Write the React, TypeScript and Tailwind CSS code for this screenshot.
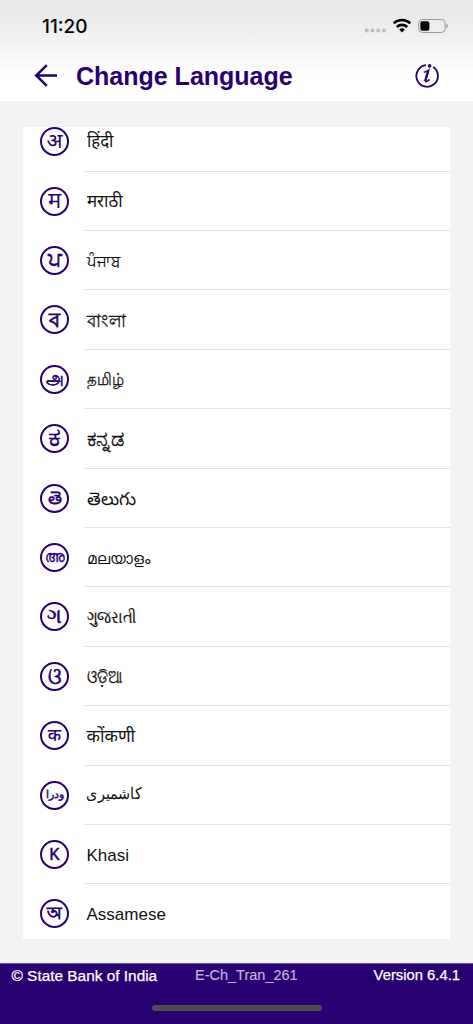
interface Language {
  symbol: string;
  name: string;
  symbolClass: string;
  nameClass: string;
  dir?: "rtl";
}

const languages: Language[] = [
  { symbol: "अ", name: "हिंदी", symbolClass: "text-[21px] pb-0.5 font-normal", nameClass: "text-[18px] pb-0.5 scale-x-[0.93]" },
  { symbol: "म", name: "मराठी", symbolClass: "text-[22px] font-normal", nameClass: "text-[18px] pb-0.5 scale-x-[0.94]" },
  { symbol: "ਪ", name: "ਪੰਜਾਬ", symbolClass: "text-[21px] pb-0.5 font-normal [-webkit-text-stroke:0.5px]", nameClass: "text-[17px] scale-x-[0.88] [-webkit-text-stroke:0.2px]" },
  { symbol: "ব", name: "বাংলা", symbolClass: "text-[20px] font-normal [-webkit-text-stroke:0.8px]", nameClass: "text-[18px] scale-x-[0.94] [-webkit-text-stroke:0.3px]" },
  { symbol: "அ", name: "தமிழ்", symbolClass: "text-[18px] pb-0.5 scale-x-[0.88] font-normal [-webkit-text-stroke:0.7px]", nameClass: "text-[17px] scale-x-[0.88] [-webkit-text-stroke:0.3px]" },
  { symbol: "ಕ", name: "ಕನ್ನಡ", symbolClass: "text-[26px] pb-1 font-normal scale-x-110 [-webkit-text-stroke:0.5px]", nameClass: "text-[21px] pb-0.5 [-webkit-text-stroke:0.4px]" },
  { symbol: "తె", name: "తెలుగు", symbolClass: "text-[18px] font-normal [-webkit-text-stroke:0.4px]", nameClass: "text-[18px] scale-x-[0.98]" },
  { symbol: "അ", name: "മലയാളം", symbolClass: "text-[16px] scale-x-[0.9] font-normal [-webkit-text-stroke:0.4px]", nameClass: "text-[15.5px] pt-0.5 scale-x-[0.96]" },
  { symbol: "ગ", name: "ગુજરાતી", symbolClass: "text-[20px] pb-0.5 font-normal [-webkit-text-stroke:0.6px]", nameClass: "text-[17px] scale-x-[0.87] [-webkit-text-stroke:0.2px]" },
  { symbol: "ଓ", name: "ଓଡ଼ିଆ", symbolClass: "text-[23px] scale-x-[0.85] font-normal [-webkit-text-stroke:0.7px]", nameClass: "text-[18px] scale-x-[0.83] [-webkit-text-stroke:0.25px]" },
  { symbol: "क", name: "कोंकणी", symbolClass: "text-[17px] font-medium", nameClass: "text-[17.5px]" },
  { symbol: "ودرا", name: "کاشمیری", symbolClass: "text-[11px] pb-0.5 font-normal [-webkit-text-stroke:0.4px]", nameClass: "text-[16px] pb-1 -ml-px scale-x-[0.9]", dir: "rtl" },
  { symbol: "K", name: "Khasi", symbolClass: "text-[17px] scale-x-[0.9] font-normal [-webkit-text-stroke:0.6px]", nameClass: "text-[17px]" },
  { symbol: "অ", name: "Assamese", symbolClass: "text-[17px] font-normal [-webkit-text-stroke:0.8px]", nameClass: "text-[17px]" },
];

function StatusBar() {
  return (
    <div className="flex h-[52px] items-center justify-between pl-[42px] pr-[25px]">
      <span className="font-['Inter',sans-serif] text-[19px] font-medium leading-none text-black">
        11:20
      </span>
      <svg width="84" height="16" viewBox="0 0 84 16">
        <g fill="#bdbdbd">
          <circle cx="2.7" cy="12.5" r="2" />
          <circle cx="8.5" cy="12.5" r="2" />
          <circle cx="14.2" cy="12.5" r="2" />
          <circle cx="20" cy="12.5" r="2" />
        </g>
        <g fill="none" stroke="#000" strokeWidth="2.6">
          <path d="M29.7 5.4a12 12 0 0 1 16.6 0" />
          <path d="M32.8 9a7.5 7.5 0 0 1 10.4 0" />
        </g>
        <path d="M35.2 11.6a4 4 0 0 1 5.6 0L38 14.4z" fill="#000" />
        <rect x="54.7" y="1.5" width="26.5" height="13" rx="3.8" fill="none" stroke="#999" />
        <rect x="56.4" y="3.2" width="9" height="9.6" rx="2" fill="#000" />
        <path d="M82.4 5.8c1.8.8 1.8 3.6 0 4.4z" fill="#999" />
      </svg>
    </div>
  );
}

function Header() {
  return (
    <header className="h-[101px] shrink-0 bg-linear-to-b from-[#e9e9e9] from-15% to-white to-75%">
      <StatusBar />
      <div className="flex h-12 items-center pl-[34px] pr-[34px] text-[#280071]">
        <svg width="24" height="24" viewBox="0 0 24 24" fill="none" stroke="currentColor" strokeWidth="2.5">
          <path d="M23 11.5H2M12.8 1.2 2.2 11.5l10.6 10.3" />
        </svg>
        <h1 className="ml-[18px] font-['Liberation_Sans',sans-serif] text-[25px] font-bold leading-none">
          Change Language
        </h1>
        <svg className="ml-auto" width="24" height="24" viewBox="0 0 24 24" fill="none" stroke="currentColor">
          <path d="M11 1.2A10.8 10.8 0 1 0 18.2 3" strokeWidth="1.8" />
          <path d="M8.8 8.2c1.8-.1 3.3-.9 4.9-2.1l-3.2 10.3c-.4 1.8 1 1.9 4-1" strokeWidth="1.5" />
          <path d="m13.2 6.6-3 10.4" strokeWidth="2.3" />
          <circle cx="14.6" cy="1.9" r="1.8" fill="currentColor" stroke="none" />
        </svg>
      </div>
    </header>
  );
}

function LanguageRow({ symbol, name, symbolClass, nameClass, dir }: Language) {
  return (
    <li className="group flex h-[59.4px] shrink-0 pl-[17px]">
      <div className="mt-[15px] flex size-[29px] shrink-0 items-center justify-center rounded-full border-2 border-[#280071] text-[#280071]">
        <span className={`whitespace-nowrap leading-none ${symbolClass}`}>{symbol}</span>
      </div>
      <div className="ml-4 flex flex-1 items-center border-b border-[#e2e2e2] pl-[1.5px] pt-0.5 group-last:border-b-0">
        <span dir={dir} className={`origin-left whitespace-nowrap leading-none text-[#111] ${nameClass}`}>
          {name}
        </span>
      </div>
    </li>
  );
}

function Footer() {
  return (
    <footer className="h-[61px] shrink-0 border-t border-[#6b5796] bg-[#280071] font-['Liberation_Sans',sans-serif] text-[14.8px] leading-none text-white">
      <div className="flex pl-[11.5px] pr-[13px] pt-1">
        <span className="w-[183.5px] text-[15.4px] [-webkit-text-stroke:0.25px]">© State Bank of India</span>
        <span className="text-[14.5px] text-[#c3b5da] [-webkit-text-stroke:0.15px]">E-Ch_Tran_261</span>
        <span className="ml-auto [-webkit-text-stroke:0.25px]">Version 6.4.1</span>
      </div>
      <div className="mx-auto mt-[22px] h-[6px] w-[170px] rounded-full bg-[#4f4f4f]" />
    </footer>
  );
}

export default function App() {
  return (
    <div className="flex h-[1024px] w-[473px] flex-col overflow-hidden bg-[#f3f3f3] font-['Liberation_Sans','Noto_Sans',sans-serif]">
      <Header />
      <main className="flex-1 px-[23px] pt-[26px]">
        <div className="h-[812px] overflow-hidden bg-white">
          <ul className="-mt-[14.8px]">
            {languages.map((language) => (
              <LanguageRow key={language.name} {...language} />
            ))}
          </ul>
        </div>
      </main>
      <Footer />
    </div>
  );
}
